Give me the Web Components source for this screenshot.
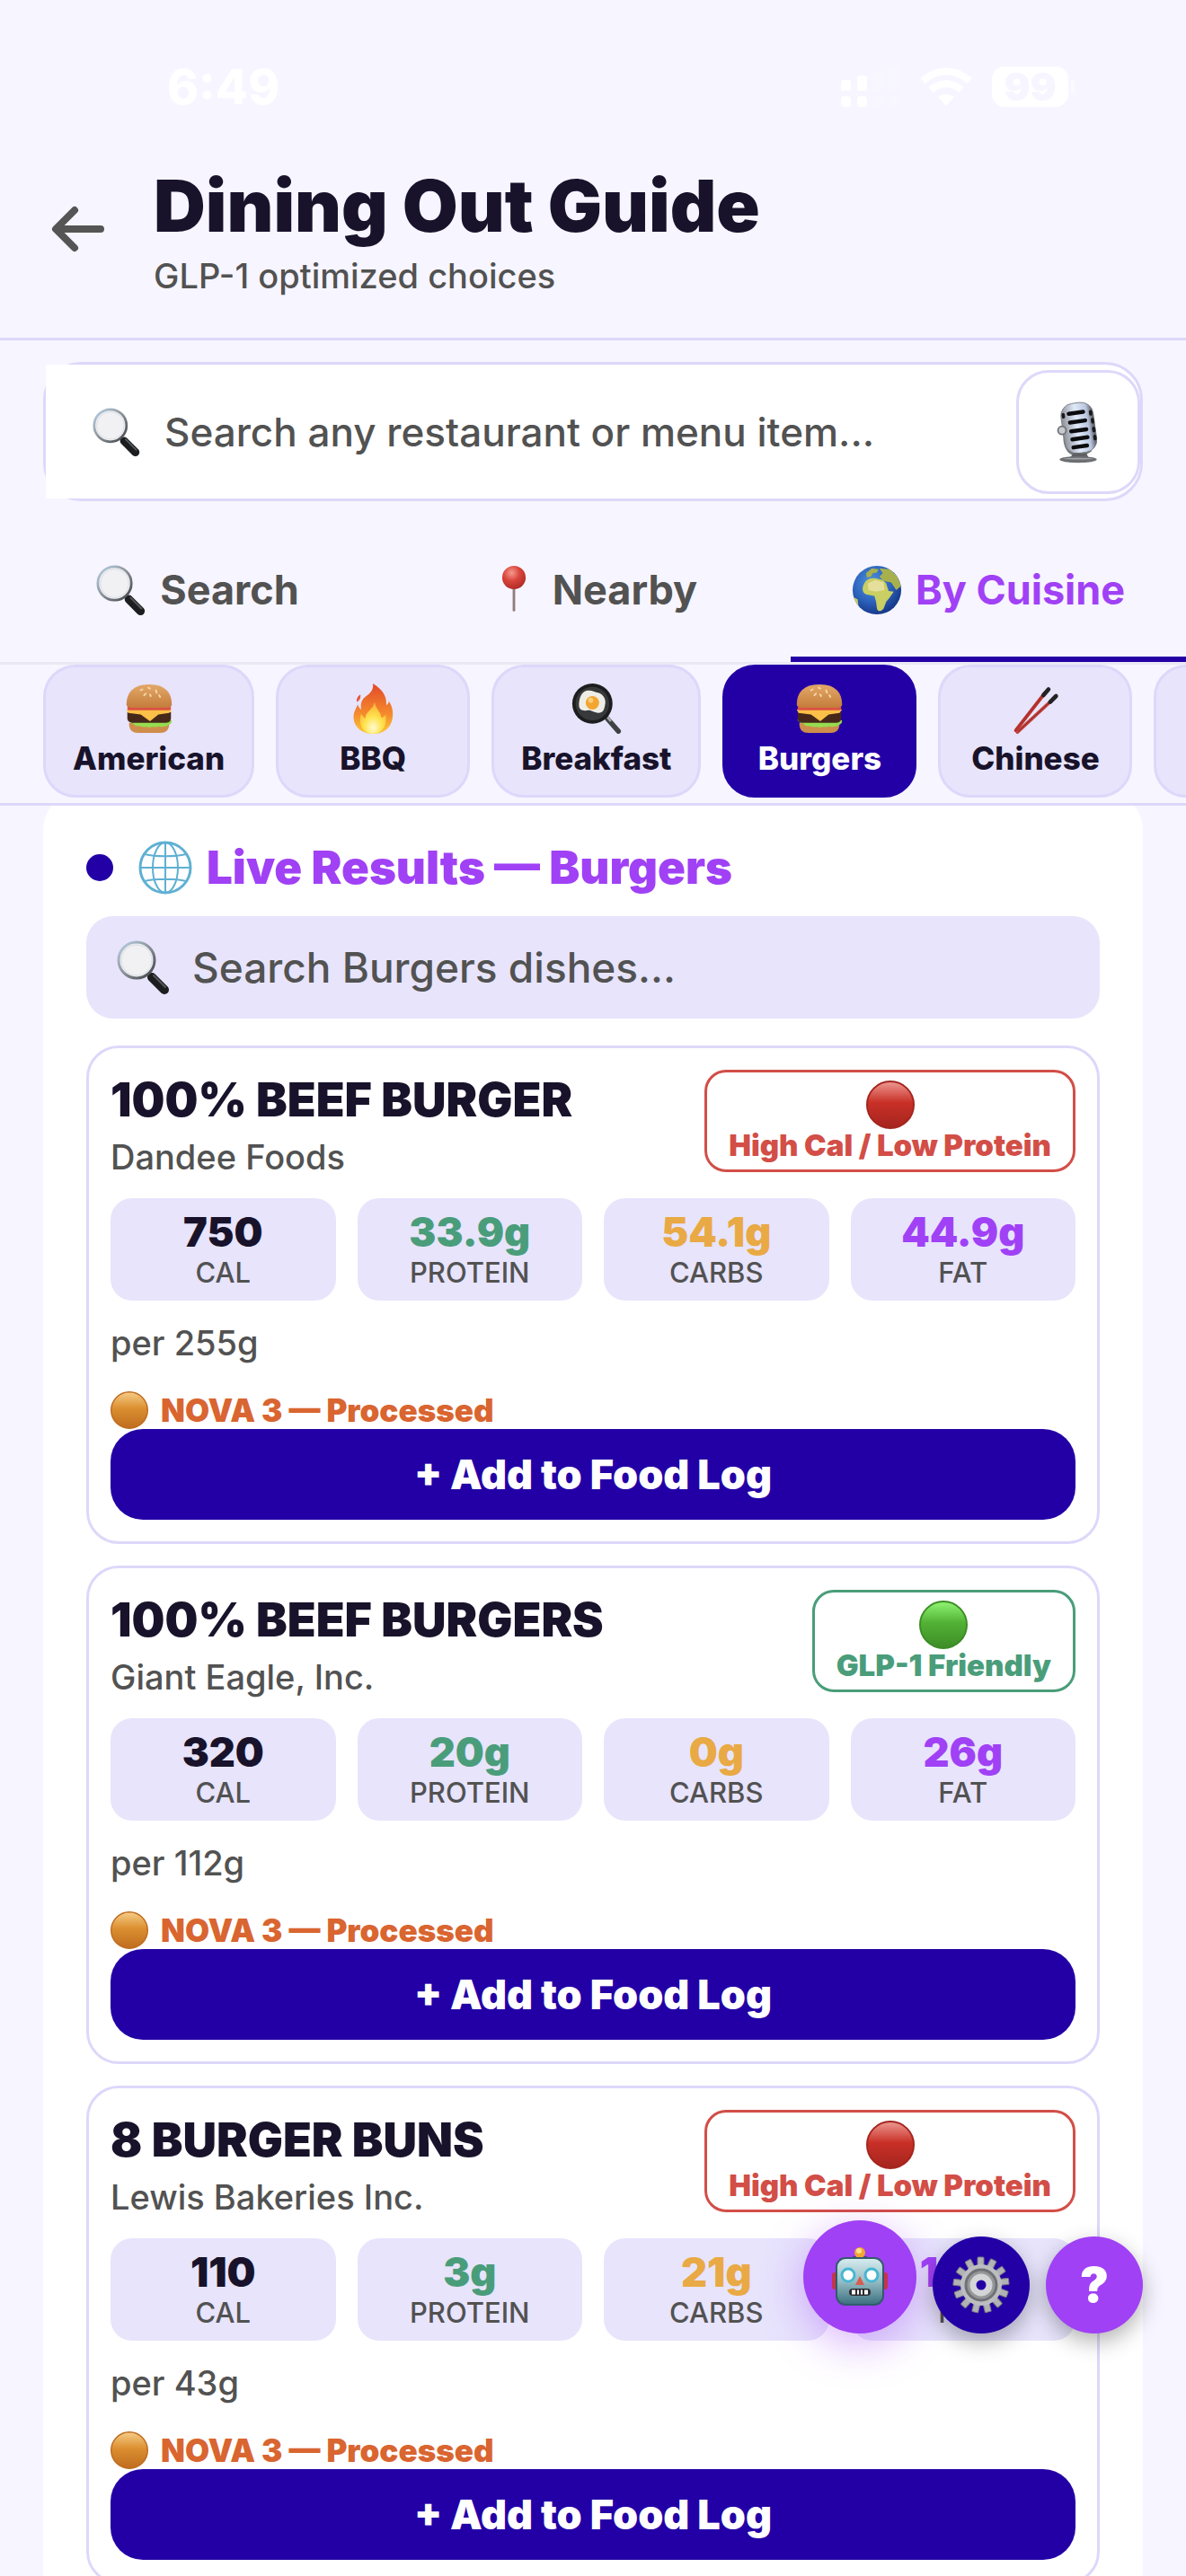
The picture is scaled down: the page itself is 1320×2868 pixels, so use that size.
<!DOCTYPE html>
<html lang="en">
<head>
<meta charset="utf-8">
<meta name="viewport" content="width=device-width, initial-scale=1">
<title>Dining Out Guide</title>
<style>
  :root {
    --page: #f7f5ff;
    --tint: #e7e4fc;
    --line: #ddd8fa;
    --primary: #2300a6;
    --accent: #a041f5;
    --ink: #18132b;
    --muted: #525252;
    --green: #4a9d7a;
    --amber: #e9a944;
    --orange: #d96530;
    --red: #d24e47;
  }
  body { margin: 0; background: var(--page); color: var(--ink); font-family: Inter, "Liberation Sans", sans-serif; }
</style>
</head>
<body>
<dining-app></dining-app>

<script>
const ICONS = {
  back: `<svg viewBox="0 0 60 60" fill="none" stroke="#555" stroke-width="8" stroke-linecap="round" stroke-linejoin="round"><path d="M55 28H6M26 7L5 28l21 21"/></svg>`,

  magnifier: `<svg viewBox="0 0 60 60">
    <defs><linearGradient id="r" x1="0" y1="0" x2="1" y2="1"><stop offset="0" stop-color="#b9d3e6"/><stop offset=".5" stop-color="#8b9299"/><stop offset="1" stop-color="#3b3f44"/></linearGradient></defs>
    <path d="M34 36l6 6" stroke="#777" stroke-width="4"/>
    <path d="M39 41l14 14" stroke="#1c1d1f" stroke-width="10" stroke-linecap="round"/>
    <path d="M41 39l13 13" stroke="#55585c" stroke-width="2" stroke-linecap="round"/>
    <circle cx="22" cy="22" r="20" fill="#f1f1f4" stroke="url(#r)" stroke-width="3"/>
    <circle cx="22" cy="22" r="17" fill="none" stroke="#d9dce2" stroke-width="1"/></svg>`,

  mic: `<svg viewBox="0 0 60 80">
    <defs><linearGradient id="m" x1="0" y1="0" x2="1" y2="0"><stop offset="0" stop-color="#8d9097"/><stop offset=".45" stop-color="#e1eafa"/><stop offset=".8" stop-color="#b9c5de"/><stop offset="1" stop-color="#4b4d52"/></linearGradient></defs>
    <path d="M14 38c-2 18 2 28 14 30h8l10-6" fill="none" stroke="#77787b" stroke-width="4"/>
    <g transform="rotate(-8 30 36)"><rect x="11" y="4" width="40" height="62" rx="15" fill="url(#m)" stroke="#777a80" stroke-width="1"/>
      <path d="M21 16h18M21 27h19M21 38h19M21 48h19M21 58h17" stroke="#0c0c0e" stroke-width="5" stroke-linecap="round"/>
      <path d="M48 17v3M49 27v3M49 38v3M49 48v3M14 16v3" stroke="#19191b" stroke-width="4" stroke-linecap="round"/></g>
    <circle cx="10" cy="38" r="5" fill="#c7cacf" stroke="#6f7175" stroke-width="2"/>
    <path d="M24 66h16l3 6H20z" fill="#5e6064"/><ellipse cx="30" cy="74" rx="23" ry="4" fill="#6d6f72"/><ellipse cx="30" cy="73" rx="18" ry="1" fill="#a2a5a8"/></svg>`,

  pin: `<svg viewBox="0 0 60 60">
    <defs><radialGradient id="p" cx=".4" cy=".3" r=".7"><stop offset="0" stop-color="#f59a8e"/><stop offset=".5" stop-color="#d9443b"/><stop offset="1" stop-color="#b12c28"/></radialGradient></defs>
    <path d="M30 26v28" stroke="#8f7d79" stroke-width="3" stroke-linecap="round"/><circle cx="30" cy="15" r="14" fill="url(#p)"/></svg>`,

  earth: `<svg viewBox="0 0 60 60">
    <defs><radialGradient id="e" cx=".4" cy=".35" r=".65"><stop offset="0" stop-color="#4f95dc"/><stop offset=".6" stop-color="#2c62bb"/><stop offset="1" stop-color="#173a8c"/></radialGradient><clipPath id="k"><circle cx="30" cy="30" r="29"/></clipPath></defs>
    <circle cx="30" cy="30" r="29" fill="url(#e)"/>
    <g clip-path="url(#k)" fill="#c9cf62"><path d="M15 22c2-5 8-7 14-6l8 2 4 4 3 9 6 1-5 7-4 5-3 8c-3 4-7 4-8 0l-1-8-2-7-10-2c-5-2-5-8-2-13z"/><path d="M17 10l7-6 8 1-2 4-5 1-2 4-5 1zM33 4l12 1 9 8 5 12-6 5-6-9-9-2-5-5 4-4z" fill="#a8b04e"/><path d="M19 22l9-4 10 3 1 9-10 2-9-2z" fill="#e6df9c"/><path d="M1 38l6 3 1 8-6-3z"/></g></svg>`,

  globe: `<svg viewBox="0 0 60 60" fill="none" stroke="#5fb0d3" stroke-width="2">
    <circle cx="30" cy="30" r="28" fill="#fff" stroke-width="3"/><ellipse cx="30" cy="30" rx="14" ry="28"/><path d="M30 2v56M2 30h56M7 15c12 3 34 3 46 0M7 45c12-3 34-3 46 0"/></svg>`,

  burger: `<svg viewBox="0 0 60 60">
    <defs><linearGradient id="b" x1="0" y1="0" x2="0" y2="1"><stop offset="0" stop-color="#e3a869"/><stop offset="1" stop-color="#c47c3b"/></linearGradient></defs>
    <path d="M6 47h48c0 9-4 12-11 12H17C10 59 6 56 6 47z" fill="#cf8d4b"/>
    <path d="M3 43l6 2 5-2 6 3 6-3 6 3 6-3 6 3 6-3 7 1c0 6-4 4-6 7-4-1-6 2-9 0-4 2-6 0-9 1-4 1-6-1-9 0-4 0-5-2-9-1-3-1-4-4-7-4z" fill="#95dd4f"/>
    <path d="M4 34h52v7c0 6-5 6-9 6H13c-5 0-9-1-9-6z" fill="#46281a"/>
    <path d="M3 31h54l-3 4-13 2-10 8-11-8-15-2z" fill="#fbc047"/>
    <rect x="4" y="27" width="52" height="5" rx="3" fill="#dc5143"/>
    <path d="M3 25C3 9 13 1 30 1s27 8 27 24c0 3-3 4-8 4H11c-5 0-8-1-8-4z" fill="url(#b)"/>
    <path d="M20 8l2-1M29 5l2 1M38 8l1 3M31 13l1 2M42 14l1 2M24 14l2-2" stroke="#f6d9a5" stroke-width="2" stroke-linecap="round"/></svg>`,

  fire: `<svg viewBox="0 0 60 60">
    <defs><linearGradient id="f" x1="0" y1="0" x2="0" y2="1"><stop offset="0" stop-color="#e2492b"/><stop offset=".6" stop-color="#f58a2c"/><stop offset="1" stop-color="#fbc937"/></linearGradient><radialGradient id="g" cx=".5" cy=".8" r=".7"><stop offset="0" stop-color="#fffbd0"/><stop offset=".5" stop-color="#ffe34d"/><stop offset="1" stop-color="#fbb53a"/></radialGradient></defs>
    <path d="M30 0c10 6 17 14 16 26 2-1 3-3 3-5 4 6 6 13 4 22-2 10-10 17-23 17S7 52 7 40c0-6 3-10 5-15 1 3 2 5 4 6-1-8 1-12 6-16 6-4 9-8 8-15z" fill="url(#f)"/><path d="M15 13c-4 3-5 6-4 9 3-2 5-5 4-9z" fill="#e2583a"/>
    <path d="M32 22c2 10 8 12 8 19 3-1 4-2 5-4 3 12-4 23-15 23S12 50 16 36c2 3 3 5 5 6 0-9 9-10 11-20z" fill="url(#g)"/></svg>`,

  pan: `<svg viewBox="0 0 60 60">
    <path d="M42 41l14 16" stroke="#3f4244" stroke-width="6" stroke-linecap="round"/><path d="M43 40l4 5" stroke="#a6a9aa" stroke-width="3"/>
    <circle cx="25" cy="24" r="24" fill="#1c1d1e"/><circle cx="25" cy="24" r="20" fill="#37393a"/>
    <path d="M15 10c6-4 12 0 17 1 6 2 10 8 8 15-1 5-2 9-8 9-5 0-7-3-12-3-6 1-11 0-11-6 0-7 2-13 6-16z" fill="#eeeee6"/><circle cx="25" cy="23" r="8" fill="#f3a531"/><circle cx="23" cy="20" r="3" fill="#fbd078"/></svg>`,

  chopsticks: `<svg viewBox="0 0 60 60" stroke-linecap="round">
    <path d="M42 11L7 56" stroke="#b5312c" stroke-width="4"/><path d="M50 20L9 58" stroke="#c5453d" stroke-width="4"/><path d="M50 20L10 57" stroke="#7c211f" stroke-width="1"/>
    <path d="M46 7l-6 7M55 15l-7 7" stroke="#232225" stroke-width="5"/></svg>`,

  robot: `<svg viewBox="0 0 64 66">
    <defs><linearGradient id="h" x1="0" y1="0" x2="0" y2="1"><stop offset="0" stop-color="#d8edf0"/><stop offset=".5" stop-color="#94bcc4"/><stop offset="1" stop-color="#3b6e7e"/></linearGradient></defs>
    <path d="M24 10h16v3l-4 3h-8l-4-3z" fill="#5b3d73"/><circle cx="32" cy="6" r="6" fill="#f2a532"/><circle cx="31" cy="4" r="3" fill="#fde08f"/>
    <rect x="1" y="28" width="8" height="19" rx="3" fill="#c63448"/><rect x="55" y="28" width="8" height="19" rx="3" fill="#c63448"/>
    <rect x="6" y="12" width="52" height="52" rx="10" fill="url(#h)" stroke="#315c6c" stroke-width="2"/>
    <circle cx="19" cy="31" r="7" fill="#fff" stroke="#48b6d2" stroke-width="3"/><circle cx="45" cy="31" r="7" fill="#fff" stroke="#48b6d2" stroke-width="3"/>
    <path d="M32 32l5 10H27z" fill="#d75d51"/><rect x="20" y="46" width="24" height="8" rx="4" fill="#2b2b30"/><path d="M23 50h4M29 50h2M33 50h2M37 50h4" stroke="#fff" stroke-width="5"/></svg>`,

  gear: `<svg viewBox="0 0 64 64">
    <g fill="#b1b2b5" stroke="#7b7c80" stroke-width="1">${Array.from({ length: 13 }, (_, i) => `<rect x="28" y="1" width="7" height="14" rx="1" transform="rotate(${i * 360 / 13} 32 32)"/>`).join('')}</g>
    <circle cx="32" cy="32" r="23" fill="#bcbdc0"/><circle cx="32" cy="32" r="17" fill="#96979b" stroke="#707175" stroke-width="3"/>
    <circle cx="32" cy="32" r="9" fill="#2300a6" stroke="#d4d5d7" stroke-width="7"/></svg>`,

  signal: `<svg viewBox="0 0 66 46" fill="#fff"><rect x="0" y="15" width="11" height="12" rx="3"/><rect x="18" y="10" width="11" height="17" rx="3"/><rect x="0" y="33" width="11" height="12" rx="4"/><rect x="18" y="33" width="11" height="12" rx="4"/><g opacity=".2"><rect x="36" y="5" width="11" height="22" rx="3"/><rect x="54" y="0" width="11" height="27" rx="3"/><rect x="36" y="33" width="11" height="12" rx="4"/><rect x="54" y="33" width="11" height="12" rx="4"/></g></svg>`,

  wifi: `<svg viewBox="0 0 58 46" fill="none" stroke="#fff" stroke-width="8"><path d="M3 16c15-14 37-14 52 0M12 26c10-9 24-9 34 0"/><path d="M20 34c6-4 12-4 18 0l-9 10z" fill="#fff" stroke="none"/></svg>`,
};

// glossy traffic-light dots used by the ratings and NOVA line
for (const [name, [top, mid, low]] of Object.entries({
  dotRed: ['#ec9a93', '#c93027', '#a4251e'],
  dotGreen: ['#92f573', '#52b235', '#3d8c26'],
  dotOrange: ['#f5cd88', '#dc8f30', '#bf6c20'],
})) {
  ICONS[name] = `<svg viewBox="0 0 56 56"><defs><linearGradient id="d" x1="0" y1="0" x2="0" y2="1"><stop offset="0" stop-color="${top}"/><stop offset=".45" stop-color="${mid}"/><stop offset="1" stop-color="${low}"/></linearGradient></defs><circle cx="28" cy="28" r="27" fill="url(#d)" stroke="${low}" stroke-width="2"/></svg>`;
}

class UiIcon extends HTMLElement {
  connectedCallback() {
    if (this.shadowRoot) return;
    this.attachShadow({ mode: 'open' });
    this.shadowRoot.innerHTML = `
      <style>
        :host { display: block; flex: none; width: var(--size, 56px); height: var(--size, 56px); }
        svg { display: block; width: 100%; height: 100%; }
      </style>
      ${ICONS[this.getAttribute('name')]}
    `;
    this.setAttribute('aria-hidden', 'true');
  }
}
customElements.define('ui-icon', UiIcon);

class StatusBar extends HTMLElement {
  constructor() {
    super();
    this.attachShadow({ mode: 'open' });
    this.shadowRoot.innerHTML = `
      <style>
        :host { display: flex; align-items: center; justify-content: space-between; box-sizing: border-box; height: 169px; padding: 24px 124px 0 186px; color: #fff; }
        .time { font-size: 53px; font-weight: 800; line-height: 60px; }
        .icons { display: flex; align-items: center; gap: 22px; }
        .signal { width: 66px; height: 46px; }
        .wifi { width: 58px; height: 46px; }
        .battery { display: flex; align-items: center; gap: 3px; }
        .level { width: 85px; border-radius: 14px; background: #fff; color: var(--page); font-size: 43px; font-weight: 900; line-height: 45px; text-align: center; }
        .nub { width: 4px; height: 15px; border-radius: 0 4px 4px 0; background: #fff; opacity: .5; }
      </style>
      <span class="time">6:49</span>
      <div class="icons">
        <ui-icon class="signal" name="signal"></ui-icon>
        <ui-icon class="wifi" name="wifi"></ui-icon>
        <div class="battery"><span class="level">99</span><span class="nub"></span></div>
      </div>
    `;
  }
}
customElements.define('status-bar', StatusBar);

class PageHeader extends HTMLElement {
  constructor() {
    super();
    this.attachShadow({ mode: 'open' });
    this.shadowRoot.innerHTML = `
      <style>
        :host { display: flex; align-items: center; gap: 48px; padding: 12px 48px 43px 51px; border-bottom: 3px solid var(--line); }
        button { display: grid; place-items: center; width: 72px; height: 72px; padding: 0; border: 0; background: none; cursor: pointer; --size: 60px; }
        h1 { margin: 0; font-size: 80px; font-weight: 900; line-height: 96px; }
        p { margin: 4px 0 0; color: var(--muted); font-size: 38px; font-weight: 450; line-height: 52px; }
      </style>
      <button type="button" aria-label="Back"><ui-icon name="back"></ui-icon></button>
      <div>
        <h1><slot name="title"></slot></h1>
        <p><slot name="subtitle"></slot></p>
      </div>
    `;
  }
}
customElements.define('page-header', PageHeader);

class SearchBox extends HTMLElement {
  connectedCallback() {
    if (this.shadowRoot) return;
    const hint = this.getAttribute('hint');
    this.attachShadow({ mode: 'open' });
    this.shadowRoot.innerHTML = `
      <style>
        :host { display: flex; align-items: center; box-sizing: border-box; height: 114px; border-radius: 30px; background: var(--tint); --size: 60px; }
        :host([voice]) { height: 155px; border: 3px solid var(--line); border-radius: 42px; background: #fff; --size: 54px; }
        label { display: flex; flex: 1; align-items: center; gap: 24px; min-width: 0; height: 100%; padding-left: 34px; }
        :host([voice]) label { gap: 26px; padding-left: 52px; background: #fff; }
        input { flex: 1; min-width: 0; padding: 0; border: 0; outline: 0; background: none; color: var(--ink); font: 450 46px/60px Inter, "Liberation Sans", sans-serif; }
        :host([voice]) input { font-size: 44px; }
        input::placeholder { color: var(--muted); opacity: 1; }
        button { display: none; place-items: center; flex: none; width: 138px; height: 138px; padding: 0; border: 3px solid var(--line); border-radius: 36px; background: #fff; cursor: pointer; }
        :host([voice]) button { display: grid; }
        button ui-icon { width: 54px; height: 72px; }
      </style>
      <label><ui-icon name="magnifier"></ui-icon><input type="text" placeholder="${hint}" aria-label="${hint}"></label>
      <button type="button" aria-label="Voice search"><ui-icon name="mic"></ui-icon></button>
    `;
  }
}
customElements.define('search-box', SearchBox);

class TabItem extends HTMLElement {
  connectedCallback() {
    if (this.shadowRoot) return;
    this.attachShadow({ mode: 'open' });
    this.shadowRoot.innerHTML = `
      <style>
        :host { display: block; flex: 1; }
        button { display: flex; align-items: center; justify-content: center; gap: 15px; width: 100%; height: 155px; padding: 0; border: 0; border-bottom: 6px solid transparent; background: none; color: var(--muted); font: 700 45px/56px Inter, "Liberation Sans", sans-serif; cursor: pointer; --size: 56px; }
        :host([active]) button { border-color: var(--primary); color: var(--accent); }
      </style>
      <button type="button" role="tab" aria-selected="${this.hasAttribute('active')}"><ui-icon name="${this.getAttribute('icon')}"></ui-icon><slot></slot></button>
    `;
  }
}
customElements.define('tab-item', TabItem);

class CuisineChip extends HTMLElement {
  connectedCallback() {
    if (this.shadowRoot) return;
    this.attachShadow({ mode: 'open' });
    this.shadowRoot.innerHTML = `
      <style>
        :host { display: block; flex: none; }
        button { display: flex; flex-direction: column; align-items: center; gap: 6px; min-width: 216px; height: 100%; padding: 18px 30px 20px; border: 3px solid var(--line); border-radius: 36px; background: var(--tint); color: var(--ink); font: 800 35px/42px Inter, "Liberation Sans", sans-serif; cursor: pointer; }
        :host([active]) button { border-color: var(--primary); background: var(--primary); color: #fff; }
      </style>
      <button type="button"><ui-icon name="${this.getAttribute('icon')}"></ui-icon><slot></slot></button>
    `;
  }
}
customElements.define('cuisine-chip', CuisineChip);

class FoodCard extends HTMLElement {
  connectedCallback() {
    if (this.shadowRoot) return;
    const { cal, protein, carbs, fat, serving, rating } = this.dataset;
    const friendly = rating === 'friendly';
    const macros = [['cal', cal], ['protein', protein], ['carbs', carbs], ['fat', fat]];

    this.attachShadow({ mode: 'open' });
    this.shadowRoot.innerHTML = `
      <style>
        :host { display: block; padding: 24px; border: 3px solid var(--line); border-radius: 36px; background: #fff; }
        .head { display: flex; align-items: flex-start; justify-content: space-between; gap: 24px; }
        h3 { margin: 0; font-size: 52px; font-weight: 900; line-height: 68px; }
        p { margin: 0; color: var(--muted); font-size: 38px; font-weight: 450; line-height: 50px; }
        .brand { margin-top: 4px; }
        .badge { display: flex; flex-direction: column; align-items: center; flex: none; padding: 9px 24px; border: 3px solid; border-radius: 24px; color: var(--red); font-size: 33px; font-weight: 900; line-height: 36px; --size: 54px; }
        .badge.friendly { color: var(--green); }
        .macros { display: grid; grid-template-columns: repeat(4, 1fr); gap: 24px; margin: 21px 0 22px; }
        .macros div { display: flex; flex-direction: column-reverse; padding: 12px 0; border-radius: 24px; background: var(--tint); text-align: center; }
        dt { color: var(--muted); font-size: 31px; font-weight: 450; line-height: 38px; text-transform: uppercase; }
        dd { margin: 0; font-size: 45px; font-weight: 900; line-height: 52px; }
        .protein dd { color: var(--green); }
        .carbs dd { color: var(--amber); }
        .fat dd { color: var(--accent); }
        .nova { display: flex; align-items: center; gap: 14px; margin-top: 29px; color: var(--orange); font-size: 35px; font-weight: 900; line-height: 42px; --size: 42px; }
        .add { display: block; width: 100%; height: 101px; padding: 0; border: 0; border-radius: 36px; background: var(--primary); color: #fff; font: 900 45px/56px Inter, "Liberation Sans", sans-serif; cursor: pointer; }
      </style>
      <div class="head">
        <div>
          <h3><slot name="name"></slot></h3>
          <p class="brand"><slot name="brand"></slot></p>
        </div>
        <div class="badge ${friendly ? 'friendly' : ''}">
          <ui-icon name="${friendly ? 'dotGreen' : 'dotRed'}"></ui-icon>
          <span>${friendly ? 'GLP-1 Friendly' : 'High Cal / Low Protein'}</span>
        </div>
      </div>
      <dl class="macros">
        ${macros.map(([label, value]) => `<div class="${label}"><dt>${label}</dt><dd>${value}</dd></div>`).join('')}
      </dl>
      <p>per ${serving}</p>
      <div class="nova"><ui-icon name="dotOrange"></ui-icon><span>NOVA 3 — Processed</span></div>
      <button class="add" type="button">+ Add to Food Log</button>
    `;
  }
}
customElements.define('food-card', FoodCard);

class ResultsPanel extends HTMLElement {
  constructor() {
    super();
    this.attachShadow({ mode: 'open' });
    this.shadowRoot.innerHTML = `
      <style>
        :host { display: block; padding: 54px 48px 48px; border-radius: 42px; background: #fff; }
        header { display: flex; align-items: center; margin-bottom: 24px; --size: 60px; }
        .dot { width: 30px; height: 30px; margin-right: 28px; border-radius: 50%; background: var(--primary); }
        h2 { margin: 0 0 0 16px; color: var(--accent); font-size: 51px; font-weight: 900; line-height: 60px; }
        .list { display: flex; flex-direction: column; gap: 24px; margin-top: 30px; }
      </style>
      <header><span class="dot"></span><ui-icon name="globe"></ui-icon><h2><slot name="heading"></slot></h2></header>
      <search-box hint="Search Burgers dishes..."></search-box>
      <div class="list"><slot></slot></div>
    `;
  }
}
customElements.define('results-panel', ResultsPanel);

class FabBar extends HTMLElement {
  constructor() {
    super();
    this.attachShadow({ mode: 'open' });
    this.shadowRoot.innerHTML = `
      <style>
        :host { position: fixed; right: 48px; bottom: 270px; display: flex; align-items: flex-end; gap: 18px; }
        button { display: grid; place-items: center; width: 108px; height: 108px; padding: 0; border: 0; border-radius: 50%; background: var(--accent); color: #fff; font: 900 54px/60px Inter, "Liberation Sans", sans-serif; box-shadow: 0 9px 24px rgba(0, 0, 0, .3); cursor: pointer; --size: 64px; }
        .robot { width: 126px; height: 126px; box-shadow: 0 12px 48px rgba(160, 65, 245, .4); --size: 66px; }
        .gear { background: var(--primary); }
      </style>
      <button class="robot" type="button" aria-label="Assistant"><ui-icon name="robot"></ui-icon></button>
      <button class="gear" type="button" aria-label="Settings"><ui-icon name="gear"></ui-icon></button>
      <button type="button" aria-label="Help">?</button>
    `;
  }
}
customElements.define('fab-bar', FabBar);

class DiningApp extends HTMLElement {
  constructor() {
    super();
    this.attachShadow({ mode: 'open' });
    this.shadowRoot.innerHTML = `
      <style>
        :host { display: flex; flex-direction: column; height: 100vh; overflow: hidden; }
        status-bar, page-header, .search, nav, .chips { flex-shrink: 0; }
        .search { padding: 24px 48px; }
        nav { display: flex; border-bottom: 3px solid #ebe8f5; }
        .chips { display: flex; gap: 24px; padding: 0 48px 6px; border-bottom: 3px solid var(--line); overflow-x: auto; scrollbar-width: none; }
        main { flex: 1; min-height: 0; padding: 0 48px; overflow-y: auto; scrollbar-width: none; }
        /* panel is scrolled slightly under the chip row */
        results-panel { margin-top: -15px; }
      </style>
      <status-bar></status-bar>
      <page-header>
        <span slot="title">Dining Out Guide</span>
        <span slot="subtitle">GLP-1 optimized choices</span>
      </page-header>
      <div class="search"><search-box voice hint="Search any restaurant or menu item..."></search-box></div>
      <nav role="tablist">
        <tab-item icon="magnifier">Search</tab-item>
        <tab-item icon="pin">Nearby</tab-item>
        <tab-item icon="earth" active>By Cuisine</tab-item>
      </nav>
      <div class="chips">
        <cuisine-chip icon="burger">American</cuisine-chip>
        <cuisine-chip icon="fire">BBQ</cuisine-chip>
        <cuisine-chip icon="pan">Breakfast</cuisine-chip>
        <cuisine-chip icon="burger" active>Burgers</cuisine-chip>
        <cuisine-chip icon="chopsticks">Chinese</cuisine-chip>
        <cuisine-chip icon="pan"></cuisine-chip>
      </div>
      <main>
        <results-panel>
          <span slot="heading">Live Results — Burgers</span>
          <food-card data-cal="750" data-protein="33.9g" data-carbs="54.1g" data-fat="44.9g" data-serving="255g" data-rating="high">
            <span slot="name">100% BEEF BURGER</span>
            <span slot="brand">Dandee Foods</span>
          </food-card>
          <food-card data-cal="320" data-protein="20g" data-carbs="0g" data-fat="26g" data-serving="112g" data-rating="friendly">
            <span slot="name">100% BEEF BURGERS</span>
            <span slot="brand">Giant Eagle, Inc.</span>
          </food-card>
          <food-card data-cal="110" data-protein="3g" data-carbs="21g" data-fat="1.5g" data-serving="43g" data-rating="high">
            <span slot="name">8 BURGER BUNS</span>
            <span slot="brand">Lewis Bakeries Inc.</span>
          </food-card>
        </results-panel>
      </main>
      <fab-bar></fab-bar>
    `;
  }
}
customElements.define('dining-app', DiningApp);
</script>
</body>
</html>
